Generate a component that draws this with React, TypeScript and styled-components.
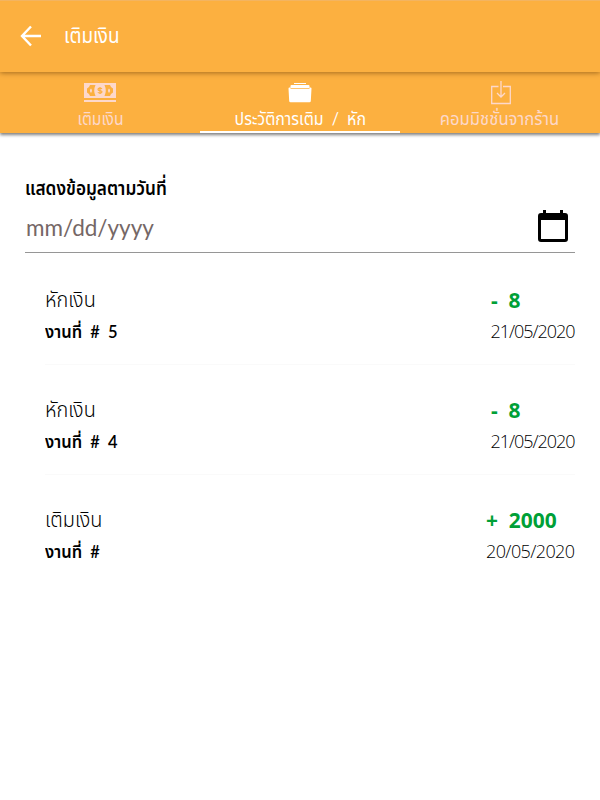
import React from "react";
import styled, { createGlobalStyle } from "styled-components";

const Global = createGlobalStyle`
  * { box-sizing: border-box; }
  body { margin: 0; background: #fff; font-family: Lato, "Noto Sans Thai", "Noto Sans", sans-serif; color: #000; }
`;

const Screen = styled.div`
  width: 600px;
  height: 800px;
  overflow: hidden;
  background: #fff;
`;

const AppBar = styled.header`
  position: relative;
  z-index: 1;
  display: flex;
  align-items: center;
  gap: 23px;
  height: 72px;
  padding: 0 0 2px 20px;
  border-top: 1px solid #f3b461;
  background: #fcb040;
  color: #fff;
  box-shadow: 0 1px 5px rgba(90, 50, 0, 0.55);
`;

const Text = styled.span<{ $size: number; $weight?: number; $sx?: number; $origin?: string; $track?: number }>`
  display: inline-block;
  white-space: pre;
  font-size: ${(p) => p.$size}px;
  font-weight: ${(p) => p.$weight ?? 400};
  letter-spacing: ${(p) => p.$track ?? 0}px;
  line-height: 24px;
  transform: scaleX(${(p) => p.$sx ?? 1});
  transform-origin: ${(p) => p.$origin ?? "left"};
`;

const Title = styled(Text)`
  padding-bottom: 2px;
`;

const Tabs = styled.nav`
  display: grid;
  grid-template-columns: repeat(3, 200px);
  height: 61px;
  background: #fcb040;
  box-shadow: 0 2px 3px rgba(0, 0, 0, 0.5);
`;

const Tab = styled.div<{ $active?: boolean }>`
  display: flex;
  flex-direction: column;
  align-items: center;
  gap: 1px;
  padding-top: 8px;
  color: ${(p) => (p.$active ? "#fff" : "#fdd8cb")};
  border-bottom: 2px solid ${(p) => (p.$active ? "#fff" : "transparent")};
  svg { display: block; flex: none; }
`;

const Field = styled.section`
  margin: 42px 25px 0;
  height: 78px;
  border-bottom: 1px solid #969696;
`;

const DateInput = styled.div`
  display: flex;
  justify-content: space-between;
  align-items: center;
  height: 40px;
  margin-top: 7px;
  padding: 0 7px 0 1px;
  color: #756766;
  svg { display: block; color: #000; }
`;

const Placeholder = styled(Text)`
  padding-top: 3px;
`;

const List = styled.ul`
  list-style: none;
  margin: 2px 25px 0 45px;
  padding: 0;
`;

const Row = styled.li`
  display: flex;
  justify-content: space-between;
  height: 110px;
  padding-top: 32px;
  border-bottom: 1px solid #fafafa;
  &:last-child { border-bottom: 0; }
`;

const Cell = styled.div`
  display: flex;
  flex-direction: column;
  gap: 9px;
`;

const Figures = styled(Cell)<{ $width: number }>`
  width: ${(p) => p.$width}px;
  gap: 8px;
  font-family: "Open Sans", "Noto Sans", sans-serif;
`;

const Amount = styled(Text)`
  color: #00a037;
`;

const BackIcon = () => (
  <svg width="21" height="22" viewBox="0 0 21 22" fill="none" stroke="currentColor" strokeWidth="2.4">
    <path d="M11 1.5 2 11l9 9.5M2 11h19" />
  </svg>
);

const MoneyIcon = () => (
  <svg width="32" height="25" viewBox="0 0 32 25">
    <path fill="currentColor" d="M0 3h32v15H0zM0 20h32v2H0z" />
    <path
      fill="#fcb040"
      fillRule="evenodd"
      d="M6 5h5.500q-2.500 5.500 0 11H6l-1-2-2-1.500v-4L5 7zM7 8.500q-2.200 2 0 4.500 2-2.500 0-4.500zM26 5h-5.500q2.500 5.500 0 11H26l1-2 2-1.500v-4L27 7zM25 8.500q-2 2 0 4.500 2.200-2.500 0-4.500z"
    />
    <path fill="none" stroke="#fcb040" strokeWidth="1.200" d="M18 8.800c-1-1-4-1-4 .6 0 1.700 4 .7 4 2.400 0 1.600-3 1.600-4.200.6M16 7v7" />
  </svg>
);

const FolderIcon = () => (
  <svg width="24" height="25" viewBox="0 0 24 25" fill="currentColor">
    <path d="M6 3h12v1H6zM3.500 5h17q1 0 1 1v2h-19V6q0-1 1-1z" />
    <path d="M1.500 7.500h1V8.700h19V7.500h1q1 0 1 1l-.7 12.500q-.1 1.200-1.300 1.200h-19Q1.300 22.200 1.200 21L.5 8.500q0-1 1-1z" />
  </svg>
);

const ImportIcon = () => (
  <svg width="22" height="25" viewBox="-2 0 22 25" fill="none" stroke="currentColor" strokeWidth="1.300">
    <path d="M7.500 6.500H.7v17h18.600v-17H12M10 1v16M6 13l4 4 4-4" />
  </svg>
);

const CalendarIcon = () => (
  <svg width="30" height="33" viewBox="0 0 30 33" fill="currentColor">
    <path fillRule="evenodd" d="M5 0h3v3h14V0h3v3h2q3 0 3 3v23q0 3-3 3H3q-3 0-3-3V6q0-3 3-3h2zM3 10v19h24V10z" />
  </svg>
);

const rows = [
  { title: "หักเงิน", job: "งานที่  #  5", amount: "-  8", date: "21/05/2020", width: 84.5, track: -1.05 },
  { title: "หักเงิน", job: "งานที่  #  4", amount: "-  8", date: "21/05/2020", width: 84.5, track: -1.05 },
  { title: "เติมเงิน", job: "งานที่  #", amount: "+  2000", date: "20/05/2020", width: 89, track: -0.6 },
];

export default function App() {
  return (
    <>
      <Global />
      <Screen>
        <AppBar>
          <BackIcon />
          <Title $size={21} $sx={0.9}>เติมเงิน</Title>
        </AppBar>
        <Tabs>
          <Tab><MoneyIcon /><Text $size={18} $sx={0.87} $origin="center">เติมเงิน</Text></Tab>
          <Tab $active><FolderIcon /><Text $size={18} $sx={0.885} $origin="center">ประวัติการเติม  /  หัก</Text></Tab>
          <Tab><ImportIcon /><Text $size={18} $sx={0.925} $origin="center">คอมมิชชั่นจากร้าน</Text></Tab>
        </Tabs>
        <Field>
          <Text $size={20} $weight={600} $sx={0.86}>แสดงข้อมูลตามวันที่</Text>
          <DateInput>
            <Placeholder $size={22.5}>mm/dd/yyyy</Placeholder>
            <CalendarIcon />
          </DateInput>
        </Field>
        <List>
          {rows.map((r, i) => (
            <Row key={i}>
              <Cell>
                <Text $size={20.5} $weight={300} $sx={0.97}>{r.title}</Text>
                <Text $size={17} $weight={600} $sx={0.97}>{r.job}</Text>
              </Cell>
              <Figures $width={r.width}>
                <Amount $size={22} $weight={700} $sx={0.95}>{r.amount}</Amount>
                <Text $size={18} $weight={300} $track={r.track}>{r.date}</Text>
              </Figures>
            </Row>
          ))}
        </List>
      </Screen>
    </>
  );
}
